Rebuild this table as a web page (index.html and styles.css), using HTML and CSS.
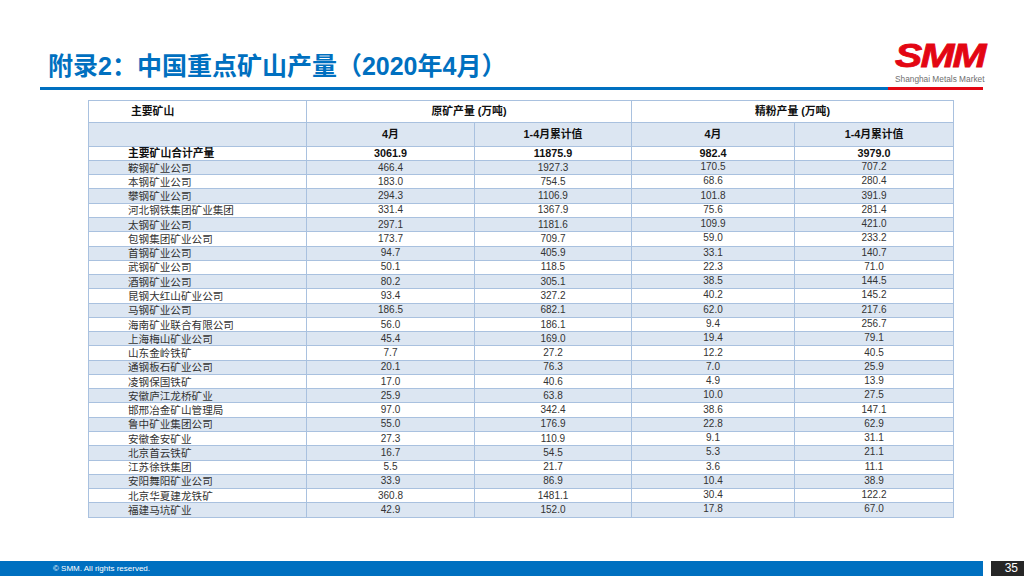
FILE: index.html
```html
<!DOCTYPE html>
<html lang="zh">
<head>
<meta charset="utf-8">
<title>附录2：中国重点矿山产量（2020年4月）</title>
<link rel="stylesheet" href="styles.css">
</head>
<body>
<div class="page">
  <header class="header">
    <h1 class="title">附录2：中国重点矿山产量（2020年4月）</h1>
    <div class="logo">
      <div class="logo-mark">SMM</div>
      <div class="logo-sub">Shanghai Metals Market</div>
    </div>
  </header>
  <div class="rule"><span class="rule-blue"></span><span class="rule-red"></span></div>

  <table class="data">
    <colgroup>
      <col class="c1"><col class="c2"><col class="c3"><col class="c4"><col class="c5">
    </colgroup>
    <thead>
      <tr class="h1">
        <th class="name">主要矿山</th>
        <th colspan="2">原矿产量 (万吨)</th>
        <th colspan="2">精粉产量 (万吨)</th>
      </tr>
      <tr class="h2">
        <th></th>
        <th>4月</th>
        <th>1-4月累计值</th>
        <th>4月</th>
        <th>1-4月累计值</th>
      </tr>
    </thead>
    <tbody>
      <tr class="total"><td class="name">主要矿山合计产量</td><td>3061.9</td><td>11875.9</td><td class="r">982.4</td><td class="r">3979.0</td></tr>
      <tr><td class="name">鞍钢矿业公司</td><td>466.4</td><td>1927.3</td><td class="r">170.5</td><td class="r">707.2</td></tr>
      <tr><td class="name">本钢矿业公司</td><td>183.0</td><td>754.5</td><td class="r">68.6</td><td class="r">280.4</td></tr>
      <tr><td class="name">攀钢矿业公司</td><td>294.3</td><td>1106.9</td><td class="r">101.8</td><td class="r">391.9</td></tr>
      <tr><td class="name">河北钢铁集团矿业集团</td><td>331.4</td><td>1367.9</td><td class="r">75.6</td><td class="r">281.4</td></tr>
      <tr><td class="name">太钢矿业公司</td><td>297.1</td><td>1181.6</td><td class="r">109.9</td><td class="r">421.0</td></tr>
      <tr><td class="name">包钢集团矿业公司</td><td>173.7</td><td>709.7</td><td class="r">59.0</td><td class="r">233.2</td></tr>
      <tr><td class="name">首钢矿业公司</td><td>94.7</td><td>405.9</td><td class="r">33.1</td><td class="r">140.7</td></tr>
      <tr><td class="name">武钢矿业公司</td><td>50.1</td><td>118.5</td><td class="r">22.3</td><td class="r">71.0</td></tr>
      <tr><td class="name">酒钢矿业公司</td><td>80.2</td><td>305.1</td><td class="r">38.5</td><td class="r">144.5</td></tr>
      <tr><td class="name">昆钢大红山矿业公司</td><td>93.4</td><td>327.2</td><td class="r">40.2</td><td class="r">145.2</td></tr>
      <tr><td class="name">马钢矿业公司</td><td>186.5</td><td>682.1</td><td class="r">62.0</td><td class="r">217.6</td></tr>
      <tr><td class="name">海南矿业联合有限公司</td><td>56.0</td><td>186.1</td><td class="r">9.4</td><td class="r">256.7</td></tr>
      <tr><td class="name">上海梅山矿业公司</td><td>45.4</td><td>169.0</td><td class="r">19.4</td><td class="r">79.1</td></tr>
      <tr><td class="name">山东金岭铁矿</td><td>7.7</td><td>27.2</td><td class="r">12.2</td><td class="r">40.5</td></tr>
      <tr><td class="name">通钢板石矿业公司</td><td>20.1</td><td>76.3</td><td class="r">7.0</td><td class="r">25.9</td></tr>
      <tr><td class="name">凌钢保国铁矿</td><td>17.0</td><td>40.6</td><td class="r">4.9</td><td class="r">13.9</td></tr>
      <tr><td class="name">安徽庐江龙桥矿业</td><td>25.9</td><td>63.8</td><td class="r">10.0</td><td class="r">27.5</td></tr>
      <tr><td class="name">邯邢冶金矿山管理局</td><td>97.0</td><td>342.4</td><td class="r">38.6</td><td class="r">147.1</td></tr>
      <tr><td class="name">鲁中矿业集团公司</td><td>55.0</td><td>176.9</td><td class="r">22.8</td><td class="r">62.9</td></tr>
      <tr><td class="name">安徽金安矿业</td><td>27.3</td><td>110.9</td><td class="r">9.1</td><td class="r">31.1</td></tr>
      <tr><td class="name">北京首云铁矿</td><td>16.7</td><td>54.5</td><td class="r">5.3</td><td class="r">21.1</td></tr>
      <tr><td class="name">江苏徐铁集团</td><td>5.5</td><td>21.7</td><td class="r">3.6</td><td class="r">11.1</td></tr>
      <tr><td class="name">安阳舞阳矿业公司</td><td>33.9</td><td>86.9</td><td class="r">10.4</td><td class="r">38.9</td></tr>
      <tr><td class="name">北京华夏建龙铁矿</td><td>360.8</td><td>1481.1</td><td class="r">30.4</td><td class="r">122.2</td></tr>
      <tr><td class="name">福建马坑矿业</td><td>42.9</td><td>152.0</td><td class="r">17.8</td><td class="r">67.0</td></tr>
    </tbody>
  </table>

  <footer class="footer">
    <div class="footer-bar">© SMM. All rights reserved.</div>
    <div class="page-num">35</div>
  </footer>
</div>
</body>
</html>
```

FILE: styles.css
```css
html, body {
  margin: 0;
  padding: 0;
  background: #ffffff;
}

.page {
  width: 1024px;
  height: 576px;
  overflow: hidden;
  display: flex;
  flex-direction: column;
  font-family: "Liberation Sans", "Noto Sans CJK SC", sans-serif;
}

.header {
  height: 87px;
  display: flex;
  justify-content: space-between;
  align-items: flex-start;
}

.title {
  margin: 51px 0 0 48px;
  font-size: 25px;
  line-height: 30px;
  font-weight: bold;
  color: #0070c0;
  white-space: nowrap;
}

.logo {
  margin: 38px 41px 0 0;
  width: 88px;
}

.logo-mark {
  font-size: 34px;
  line-height: 34px;
  font-weight: bold;
  font-style: italic;
  color: #e30613;
  letter-spacing: -1.5px;
  -webkit-text-stroke: 0.8px #e30613;
  transform: scaleX(1.2);
  transform-origin: left center;
  white-space: nowrap;
}

.logo-sub {
  margin-top: 2px;
  font-size: 8.3px;
  line-height: 10px;
  color: #6f6f6f;
  white-space: nowrap;
}

.rule {
  display: flex;
  height: 3px;
  margin: 0 41px 0 40px;
}

.rule-blue {
  flex: 1;
  background: #0070c0;
}

.rule-red {
  width: 95px;
  background: #e30613;
}

.data {
  margin: 10px 0 0 88px;
  width: 865px;
  table-layout: fixed;
  border-collapse: collapse;
  font-size: 10.6px;
  color: #333333;
}

.c1 { width: 218px; }
.c2 { width: 168px; }
.c3 { width: 157px; }
.c4 { width: 163px; }
.c5 { width: 159px; }

.data th,
.data td {
  border: 1px solid #a9c1df;
  padding: 0;
  text-align: center;
  line-height: 12px;
  white-space: nowrap;
  overflow: hidden;
}

.data th {
  font-weight: bold;
  color: #111111;
  font-size: 10.8px;
}

.data .h1 { height: 21.7px; }
.data .h2 { height: 24px; background: #dce6f2; }

.data th.name {
  text-align: left;
  padding-left: 42px;
}

.data td {
  font-size: 10px;
}

.data td.name {
  text-align: left;
  padding-left: 39px;
  font-size: 10.6px;
}

.data td.r {
  padding-bottom: 1px;
}

.data tbody tr { height: 14.28px; }
.data tbody tr:nth-child(even) { background: #dce6f2; }

.data tr.total td {
  font-weight: bold;
  color: #111111;
  font-size: 10.8px;
}

.footer {
  margin-top: auto;
  height: 15px;
  display: flex;
  gap: 8px;
}

.footer-bar {
  flex: 1;
  background: #0070c0;
  color: #ffffff;
  font-size: 8px;
  line-height: 15px;
  padding-left: 53px;
}

.page-num {
  width: 33px;
  background: #262626;
  color: #ffffff;
  font-size: 12px;
  line-height: 15px;
  text-align: right;
  padding-right: 6px;
  box-sizing: border-box;
}
```
